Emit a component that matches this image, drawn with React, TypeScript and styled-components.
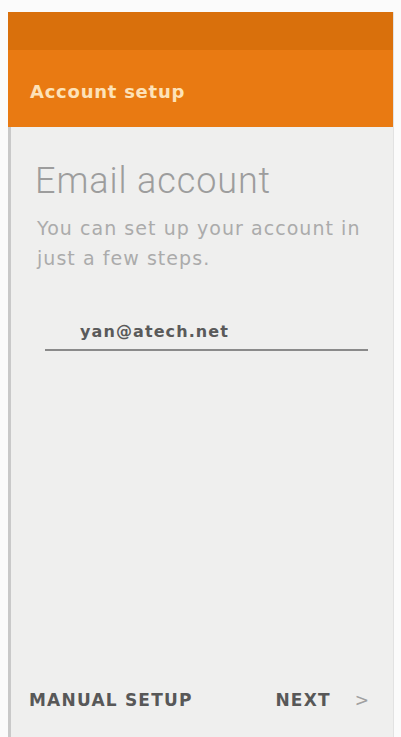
import React from "react";
import styled, { createGlobalStyle } from "styled-components";

const GlobalStyle = createGlobalStyle`
    html, body {
        margin: 0;
        padding: 0;
        background: #fbfbfb;
    }
    body {
        font-family: "DejaVu Sans", "Liberation Sans", sans-serif;
    }
`;

const Page = styled.div`
    width: 401px;
    height: 737px;
    padding: 12px 7px 0 8px;
    box-sizing: border-box;
    overflow: hidden;
`;

const Phone = styled.div`
    height: 100%;
    display: flex;
    flex-direction: column;
    background: #efefee;
    border-left: 3px solid #c9c9c9;
    border-right: 1px solid #e2e2e2;
`;

const StatusBar = styled.div`
    height: 38px;
    background: #d9700c;
    margin-left: -3px;
`;

const AppBar = styled.header`
    height: 77px;
    background: #e97a12;
    margin-left: -3px;
    display: flex;
    align-items: center;
    padding-left: 22px;
    padding-top: 6px;
    box-sizing: border-box;
`;

const Title = styled.h1`
    margin: 0;
    font-size: 18px;
    font-weight: 700;
    color: #fde2b8;
    letter-spacing: 0.75px;
`;

const Content = styled.main`
    flex: 1;
    padding: 32px 24px 0 24px;
    display: flex;
    flex-direction: column;
`;

const Heading = styled.h2`
    margin: 0;
    font-family: "Roboto", "Liberation Sans", sans-serif;
    font-size: 36px;
    font-weight: 300;
    color: #9d9d9d;
    letter-spacing: 0.9px;
    line-height: 44px;
`;

const Subtitle = styled.p`
    margin: 10px 0 0 2px;
    font-size: 19px;
    font-weight: 400;
    color: #ababab;
    line-height: 30px;
    letter-spacing: 1.05px;
`;

const Field = styled.div`
    margin: 49px 1px 0 10px;
    padding: 0 0 7px 35px;
    border-bottom: 2px solid #8a8a8a;
    line-height: 20px;
`;

const FieldValue = styled.span`
    font-size: 16px;
    font-weight: 700;
    color: #5a5a5a;
    letter-spacing: 1.1px;
`;

const Footer = styled.footer`
    height: 40px;
    margin-bottom: 17px;
    display: flex;
    align-items: center;
    justify-content: space-between;
    padding: 0 24px 0 18px;
`;

const ActionButton = styled.button`
    border: none;
    background: none;
    padding: 0;
    font-family: inherit;
    font-size: 17px;
    font-weight: 700;
    color: #585858;
    display: flex;
    align-items: center;
    gap: 24px;
    letter-spacing: 1.2px;
`;

const Chevron = styled.span`
    font-weight: 400;
    color: #a0a0a0;
    font-size: 17px;
    letter-spacing: 0;
`;

export default function App() {
    return (
        <>
            <GlobalStyle />
            <Page>
                <Phone>
                    <StatusBar />
                    <AppBar>
                        <Title>Account setup</Title>
                    </AppBar>
                    <Content>
                        <Heading>Email account</Heading>
                        <Subtitle>
                            You can set up your account in
                            <br />
                            just a few steps.
                        </Subtitle>
                        <Field>
                            <FieldValue>yan@atech.net</FieldValue>
                        </Field>
                    </Content>
                    <Footer>
                        <ActionButton>MANUAL SETUP</ActionButton>
                        <ActionButton>
                            NEXT
                            <Chevron>&gt;</Chevron>
                        </ActionButton>
                    </Footer>
                </Phone>
            </Page>
        </>
    );
}
